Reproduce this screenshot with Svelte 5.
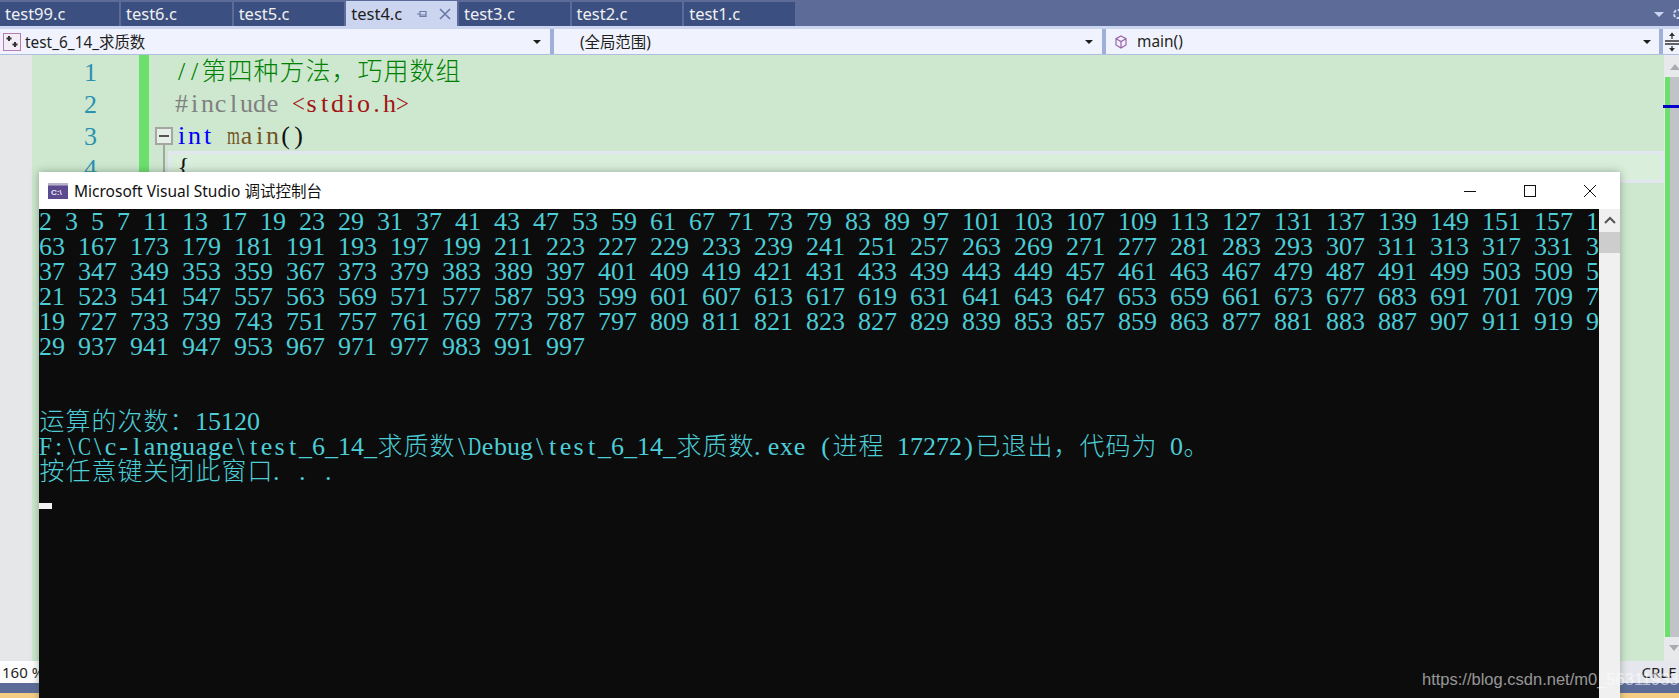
<script lang="ts">
  const tabs = ['test99.c', 'test6.c', 'test5.c', 'test4.c', 'test3.c', 'test2.c', 'test1.c']
  const active = 'test4.c'

  // primes under 1000, wrapped at the console's 120 columns
  const primes: number[] = []
  for (let n = 2; n < 1000; n++) {
    if (primes.every((p) => n % p !== 0)) primes.push(n)
  }
  const joined = primes.join(' ')
  const consoleRows: string[] = []
  for (let i = 0; i < joined.length; i += 120) consoleRows.push(joined.slice(i, i + 120))
  consoleRows.push('', '')
  consoleRows.push('运算的次数\uFF1A15120')
  consoleRows.push('F:\\C\\c-language\\test_6_14_求质数\\Debug\\test_6_14_求质数.exe (进程 17272)已退出\uFF0C代码为 0\u3002')
  consoleRows.push('按任意键关闭此窗口. . .')

  const commentLine = '//第四种方法\uFF0C巧用数组'

  const isWide = (c: string) => c.charCodeAt(0) > 0x2e7f
  // the serif face isn't monospaced, so squeeze the few glyphs wider than a cell
  const squeeze: Record<string, number> = { m: 0.64, w: 0.69, D: 0.7, C: 0.75, F: 0.9, '<': 0.88, '>': 0.88 }
</script>

{#snippet mono(text: string)}
  {#each text as c}<span
      class="cell"
      class:wide={isWide(c)}
      class:dot={c === '.'}
      style:transform={squeeze[c] ? `scaleX(${squeeze[c]})` : undefined}>{c}</span>{/each}
{/snippet}

<div class="ide">
  <div class="tabstrip">
    {#each tabs as tab}
      <div class="tab" class:active={tab === active}>
        <span>{tab}</span>
        {#if tab === active}
          <svg class="pin" viewBox="0 0 12 12" width="12" height="12">
            <path d="M1 6 H4 M4 3 V9 M4 3.5 H10 V8.5 H4 M4 7 H10" fill="none" stroke="#6d7aa5" stroke-width="1.2" />
          </svg>
          <svg class="close" viewBox="0 0 12 12" width="12" height="12">
            <path d="M1 1 L11 11 M11 1 L1 11" fill="none" stroke="#6d7aa5" stroke-width="1.7" />
          </svg>
        {/if}
      </div>
    {/each}
    <div class="strip-end">
      <span class="tri pale"></span>
      <svg viewBox="0 0 14 14" width="14" height="14">
        <circle cx="7" cy="7" r="4" fill="none" stroke="#ccd5f0" stroke-width="2" stroke-dasharray="3 1.5" />
      </svg>
    </div>
  </div>

  <div class="navbar">
    <div class="combo">
      <svg class="proj" viewBox="0 0 18 18" width="18" height="18">
        <rect x="0.5" y="0.5" width="17" height="17" fill="#f3eef5" stroke="#b57cb5" />
        <path d="M6 3 V8 M3.5 5.5 H8.5 M12 9 V14 M9.5 11.5 H14.5" stroke="#333" stroke-width="2" />
      </svg>
      <span class="label">test_6_14_求质数</span>
      <span class="tri"></span>
    </div>
    <div class="combo scope">
      <span class="label">(全局范围)</span>
      <span class="tri"></span>
    </div>
    <div class="combo member">
      <svg class="cube" viewBox="0 0 14 14" width="14" height="14">
        <path d="M7 1 L12 3.7 V10 L7 13 L2 10 V3.7 Z M2 3.7 L7 6.5 L12 3.7 M7 6.5 V13" fill="none" stroke="#9b62a8" stroke-width="1.2" />
      </svg>
      <span class="label">main()</span>
      <span class="tri"></span>
    </div>
    <div class="split">
      <svg viewBox="0 0 14 20" width="14" height="20">
        <path d="M0 9 H14 M0 12 H14 M7 1 V7 M7 14 V19" stroke="#333" stroke-width="1.3" fill="none" />
        <path d="M4 4 L7 0.5 L10 4 Z M4 16 L7 19.5 L10 16 Z" fill="#333" />
      </svg>
    </div>
  </div>

  <div class="editor">
    <div class="margin"></div>
    <div class="numbers">
      <div>1</div>
      <div>2</div>
      <div>3</div>
      <div>4</div>
    </div>
    <div class="changebar"></div>
    <div class="fold">
      <div class="foldbox"></div>
      <div class="foldline"></div>
    </div>
    <div class="code">
      <div class="line comment">{@render mono(commentLine)}</div>
      <div class="line"><span class="pre">{@render mono('#include ')}</span><span class="str">{@render mono('<stdio.h>')}</span></div>
      <div class="line"><span class="kw">{@render mono('int')}</span>{@render mono(' ')}<span class="fn">{@render mono('main')}</span>{@render mono('()')}</div>
      <div class="line current">{@render mono('{')}</div>
    </div>
    <div class="overview">
      <span class="up"></span>
      <div class="track">
        <div class="mark"></div>
      </div>
      <span class="down"></span>
    </div>
  </div>

  <div class="status">
    <span class="zoom">160 %</span>
    <span class="crlf">CRLF</span>
  </div>
  <div class="blueband"></div>
  <div class="yellowband"></div>

  <div class="window">
    <div class="titlebar">
      <svg class="appicon" viewBox="0 0 20 16" width="20" height="16">
        <rect width="20" height="16" fill="#5c4a8f" />
        <rect width="20" height="2.5" fill="#b9b3cc" />
        <text x="3" y="12" font-size="8" fill="#e8e8f0" font-family="Liberation Sans, sans-serif" font-weight="700">C:\</text>
      </svg>
      <span class="wintitle">Microsoft Visual Studio 调试控制台</span>
      <div class="controls">
        <svg viewBox="0 0 12 12" width="12" height="12"><path d="M0 6.5 H12" stroke="#111" /></svg>
        <svg viewBox="0 0 12 12" width="12" height="12"><rect x="0.5" y="0.5" width="11" height="11" fill="none" stroke="#111" /></svg>
        <svg viewBox="0 0 12 12" width="12" height="12"><path d="M0 0 L12 12 M12 0 L0 12" stroke="#111" /></svg>
      </div>
    </div>
    <div class="winbody">
      <div class="terminal">
        {#each consoleRows as row}
          <div class="row">{@render mono(row)}</div>
        {/each}
        <div class="row cursorrow"><span class="cursor"></span></div>
      </div>
      <div class="winscroll">
        <svg viewBox="0 0 12 8" width="12" height="8"><path d="M1 7 L6 2 L11 7" fill="none" stroke="#555" stroke-width="2" /></svg>
        <div class="thumb"></div>
      </div>
    </div>
  </div>

  <div class="watermark">https://blog.csdn.net/m0_56311933</div>
</div>

<style>
  :global(body) {
    margin: 0;
    background: #fff;
  }

  .ide {
    position: relative;
    width: 1679px;
    height: 698px;
    overflow: hidden;
    display: flex;
    flex-direction: column;
    font-family: 'Noto Sans', 'Noto Sans CJK SC', sans-serif;
  }

  .tabstrip {
    height: 26px;
    flex: none;
    box-sizing: border-box;
    padding-top: 2px;
    background: #5d6b99;
    display: flex;
    gap: 2px;
    align-items: stretch;
  }

  .tab {
    width: 110.65px;
    box-sizing: border-box;
    padding-left: 5px;
    background: #3b4f81;
    color: #f0f0f0;
    font-size: 16.5px;
    line-height: 24px;
    display: flex;
    align-items: center;
  }

  .tab:first-child {
    width: 119px;
  }

  .tab.active {
    background: #ccd5f0;
    color: #1e1e1e;
    margin-top: -1px;
  }

  .pin {
    margin-left: 14px;
  }

  .close {
    margin-left: 11px;
  }

  .strip-end {
    margin-left: auto;
    display: flex;
    align-items: center;
    gap: 7px;
    margin-right: -6px;
  }

  .tri {
    width: 0;
    height: 0;
    border-left: 4px solid transparent;
    border-right: 4px solid transparent;
    border-top: 4px solid #1e1e1e;
    margin-left: auto;
  }

  .tri.pale {
    border-left-width: 5px;
    border-right-width: 5px;
    border-top: 5px solid #ccd5f0;
  }

  .navbar {
    height: 29px;
    flex: none;
    box-sizing: border-box;
    border-top: 3px solid #ccd5f0;
    border-bottom: 1px solid #b0bfde;
    background: #9eb0da;
    display: flex;
    gap: 4px;
  }

  .combo {
    background: #f0f3fd;
    display: flex;
    align-items: center;
    font-size: 15.4px;
    color: #1e1e1e;
    padding-right: 9px;
    box-sizing: border-box;
    width: 552px;
  }

  .proj {
    margin-left: 3px;
    margin-right: 4px;
  }

  .scope {
    width: 550px;
    padding-left: 26px;
  }

  .member {
    width: 555px;
    padding-left: 8px;
    padding-right: 8px;
  }

  .cube {
    margin-right: 9px;
  }

  .split {
    flex: 1;
    background: #f0f3fd;
    display: flex;
    align-items: center;
    padding-left: 2px;
  }

  .editor {
    flex: 1;
    display: flex;
    background: #cde8cf;
    min-height: 0;
    overflow: hidden;
  }

  .margin {
    width: 32px;
    background: #e6e7e8;
  }

  .numbers {
    width: 65px;
    padding-top: 2px;
    text-align: right;
    font: 26px/32px 'Liberation Serif', serif;
    color: #2b91af;
  }

  .changebar {
    width: 10px;
    margin-left: 42px;
    background: #6be06b;
  }

  .fold {
    width: 23px;
    padding-top: 72px;
    box-sizing: border-box;
    padding-left: 6px;
  }

  .foldbox {
    width: 18px;
    height: 18px;
    box-sizing: border-box;
    border: 2px solid #a5a5a5;
    background: #e6efe6;
    display: flex;
    align-items: center;
    justify-content: center;
  }

  .foldbox::after {
    content: '';
    width: 10px;
    height: 2px;
    background: #555;
  }

  .foldline {
    width: 2px;
    height: 30px;
    margin-left: 8px;
    background: #a5a5a5;
  }

  .code {
    flex: 1;
    padding-top: 1px;
    font-family: 'Liberation Serif', 'Noto Sans CJK SC', serif;
    font-size: 26px;
    color: #111;
  }

  .line {
    height: 32px;
    line-height: 32px;
    white-space: pre;
    box-sizing: border-box;
    padding-left: 3px;
  }

  .line.current {
    margin-left: -4px;
    margin-top: -1px;
    padding-left: 6px;
    border: 3px solid #e2e6ee;
    background: #d9eedb;
    line-height: 26px;
  }

  .comment {
    color: #008000;
  }

  .pre {
    color: #808080;
  }

  .str {
    color: #a31515;
  }

  .kw {
    color: #0000ff;
  }

  .fn {
    color: #74531f;
  }

  .cell {
    display: inline-block;
    width: 13px;
    text-align: center;
    white-space: pre;
    transform-origin: left center;
  }

  .cell.wide {
    width: 26px;
    font-weight: 300;
    font-size: 0.96em;
  }

  .terminal .cell.dot {
    text-align: left;
  }

  .overview {
    width: 15px;
    background: #e8e9eb;
    display: flex;
    flex-direction: column;
    align-items: center;
  }

  .up {
    margin: 9px 0 7px 6px;
    border-left: 5px solid transparent;
    border-right: 5px solid transparent;
    border-bottom: 6px solid #a9abb0;
  }

  .track {
    flex: 1;
    width: 100%;
    background: #c2c3c9;
    box-sizing: border-box;
    border-left: 5px solid #6be06b;
    margin-left: 2px;
    position: relative;
  }

  .mark {
    position: absolute;
    left: -7px;
    right: 0;
    top: 28px;
    height: 3px;
    background: #0000c8;
  }

  .down {
    margin: 8px 0 10px 4px;
    border-left: 5px solid transparent;
    border-right: 5px solid transparent;
    border-top: 6px solid #a9abb0;
  }

  .status {
    height: 22px;
    flex: none;
    background: #e6e7ee;
    display: flex;
    align-items: center;
    justify-content: space-between;
    font-size: 15px;
    color: #1e1e1e;
  }

  .zoom {
    background: #fdfdfd;
    height: 100%;
    width: 39px;
    padding-left: 2px;
    box-sizing: border-box;
    line-height: 22px;
    white-space: nowrap;
    overflow: hidden;
  }

  .crlf {
    padding-right: 3px;
  }

  .blueband {
    height: 10px;
    flex: none;
    background: #5d6b99;
  }

  .yellowband {
    height: 5px;
    flex: none;
    background: #f5cc84;
  }

  .window {
    position: absolute;
    left: 39px;
    top: 172px;
    width: 1581px;
    height: 540px;
    display: flex;
    flex-direction: column;
    background: #fff;
    box-shadow: 0 0 8px rgba(60, 80, 60, 0.45);
  }

  .titlebar {
    height: 37px;
    flex: none;
    display: flex;
    align-items: center;
    padding-left: 9px;
    background: #fff;
  }

  .appicon {
    margin-right: 6px;
  }

  .wintitle {
    font-size: 15.5px;
    color: #111;
  }

  .controls {
    margin-left: auto;
    display: flex;
    gap: 48px;
    padding-right: 24px;
  }

  .winbody {
    flex: 1;
    display: flex;
    min-height: 0;
  }

  .terminal {
    width: 1560px;
    background: #0c0c0c;
    color: #4dcdd6;
    font-family: 'Liberation Serif', 'Noto Sans CJK SC', serif;
    font-size: 26px;
  }

  .row {
    height: 25px;
    line-height: 25px;
    white-space: pre;
  }

  .cursorrow {
    position: relative;
  }

  .cursor {
    position: absolute;
    left: 0;
    bottom: 0;
    width: 13px;
    height: 6px;
    background: #f2f2f2;
  }

  .winscroll {
    flex: 1;
    background: #f0f0f0;
    display: flex;
    flex-direction: column;
    align-items: center;
    padding-top: 7px;
  }

  .thumb {
    margin-top: 8px;
    width: 100%;
    height: 21px;
    background: #cdcdcd;
  }

  .watermark {
    position: absolute;
    left: 1422px;
    top: 669px;
    font: 16.5px/20px 'Liberation Sans', sans-serif;
    color: rgba(255, 255, 255, 0.58);
    white-space: nowrap;
  }
</style>
